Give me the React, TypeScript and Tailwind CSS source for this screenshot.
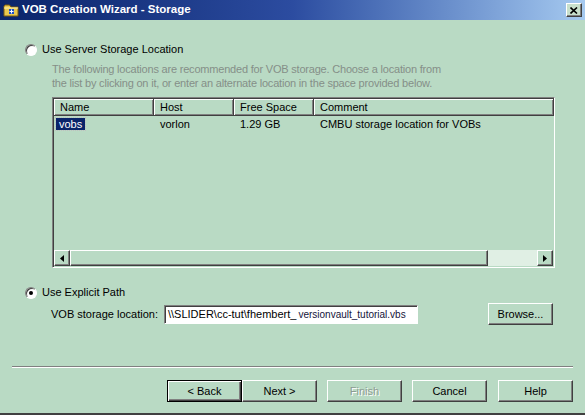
import React from 'react';

// Classic wizard dialog: "VOB Creation Wizard - Storage"

const raised =
    'border border-t-white border-l-white border-r-[#404040] border-b-[#404040] shadow-[inset_-1px_-1px_0_#808080]';

const Radio: React.FC<{ checked?: boolean }> = ({ checked }) => (
    <span className="w-[12px] h-[12px] rounded-full bg-white border border-t-[#808080] border-l-[#808080] border-r-white border-b-white shadow-[inset_1px_1px_0_#404040] flex items-center justify-center shrink-0">
        {checked && <span className="w-[4px] h-[4px] rounded-full bg-black" />}
    </span>
);

const Button: React.FC<{ label: string; w: string; isDefault?: boolean; disabled?: boolean }> = ({ label, w, isDefault, disabled }) => (
    <div
        className={
            `${w} h-[22px] flex items-center justify-center ` +
            (isDefault
                ? 'border border-black shadow-[inset_1px_1px_0_#fff,inset_-1px_-1px_0_#404040,inset_-2px_-2px_0_#808080]'
                : raised) +
            (disabled ? ' text-[#8c9c92] [text-shadow:1px_1px_0_#fff]' : ' text-black')
        }
    >
        {label}
    </div>
);

const FolderIcon = () => (
    <svg width="16" height="16" viewBox="0 0 16 16">
        <path d="M1 4 L1 14 L15 14 L15 5 L8 5 L6.5 3 L2 3 Z" fill="#e8c850" stroke="#7a5a10" strokeWidth="1" />
        <path d="M1 6 L15 6" stroke="#fff3b0" strokeWidth="1" />
        <rect x="6" y="7" width="5" height="5" fill="#2050c8" />
        <path d="M8.5 7.5 L8.5 11.5 M6.5 9.5 L10.5 9.5" stroke="#fff" strokeWidth="1" />
    </svg>
);

const Arrow: React.FC<{ dir: 'left' | 'right' }> = ({ dir }) => (
    <svg width="4" height="7" viewBox="0 0 4 7">
        {dir === 'left' ? <path d="M4 0 L0 3.5 L4 7 Z" fill="#000" /> : <path d="M0 0 L4 3.5 L0 7 Z" fill="#000" />}
    </svg>
);

const COLS = [
    { label: 'Name', w: 'w-[100px]' },
    { label: 'Host', w: 'w-[80px]' },
    { label: 'Free Space', w: 'w-[80px]' },
    { label: 'Comment', w: 'flex-1' },
];

const App: React.FC = () => {
    return (
        <div className="w-[585px] h-[415px] bg-[#b9dac4] flex flex-col font-['Liberation_Sans',Arial,sans-serif] text-[11px] text-black border-b-2 border-[#404040] overflow-hidden">
            {/* Title bar */}
            <div className="h-[20px] shrink-0 flex items-center pl-[3px] pr-[3px] bg-gradient-to-r from-[#0a246a] via-[#2c4ca0] to-[#a6caf0]">
                <FolderIcon />
                <span className="ml-[3px] text-white font-bold text-[11.5px]">VOB Creation Wizard - Storage</span>
                <div className={`ml-auto w-[16px] h-[14px] bg-[#c8e0cc] flex items-center justify-center ${raised}`}>
                    <svg width="8" height="7" viewBox="0 0 8 7">
                        <path d="M0.5 0.5 L7 6.5 M7 0.5 L0.5 6.5" stroke="#000" strokeWidth="1.6" />
                    </svg>
                </div>
            </div>

            {/* Server storage */}
            <div className="mt-[23px] ml-[25px] flex items-center gap-[5px] h-[13px]">
                <Radio />
                <span>Use Server Storage Location</span>
            </div>
            <div className="ml-[52px] mt-[6px] leading-[14px] text-[#858f88] tracking-[-0.2px]">
                <div>The following locations are recommended for VOB storage. Choose a location from</div>
                <div>the list by clicking on it, or enter an alternate location in the space provided below.</div>
            </div>

            {/* List view */}
            <div className="ml-[52px] mt-[7px] w-[503px] h-[171px] flex flex-col border border-t-[#808080] border-l-[#808080] border-r-white border-b-white shadow-[inset_1px_1px_0_#404040] pt-[1px] pl-[1px]">
                <div className="flex h-[17px] shrink-0">
                    {COLS.map(c => (
                        <div
                            key={c.label}
                            className={`${c.w} flex items-center pl-[6px] border-r border-b border-[#404040] shadow-[inset_1px_1px_0_#fff,inset_-1px_-1px_0_#808080]`}
                        >
                            {c.label}
                        </div>
                    ))}
                </div>
                <div className="flex h-[13px] mt-[2px] items-center">
                    <div className="w-[100px] pl-[2px]">
                        <span className="bg-[#0a246a] text-white px-[3px] outline-1 outline-dotted outline-[#c0c0c0]">vobs</span>
                    </div>
                    <div className="w-[80px] pl-[6px]">vorlon</div>
                    <div className="w-[80px] pl-[6px]">1.29 GB</div>
                    <div className="flex-1 pl-[6px]">CMBU storage location for VOBs</div>
                </div>
                <div className="flex-1" />
                {/* Horizontal scrollbar */}
                <div className="h-[16px] flex shrink-0 mr-[1px] mb-[1px]">
                    <div className={`w-[16px] h-[16px] flex items-center justify-center ${raised}`}>
                        <Arrow dir="left" />
                    </div>
                    <div className={`w-[418px] h-[16px] ${raised}`} />
                    <div className="flex-1 bg-[#e0efe4]" />
                    <div className={`w-[16px] h-[16px] flex items-center justify-center ${raised}`}>
                        <Arrow dir="right" />
                    </div>
                </div>
            </div>

            {/* Explicit path */}
            <div className="mt-[18px] ml-[25px] flex items-center gap-[5px] h-[13px]">
                <Radio checked />
                <span>Use Explicit Path</span>
            </div>
            <div className="mt-[4px] ml-[51px] flex items-center h-[22px]">
                <span className="w-[113px]">VOB storage location:</span>
                <div className="w-[254px] h-[19px] bg-white border border-t-[#808080] border-l-[#808080] border-r-white border-b-white shadow-[inset_1px_1px_0_#404040] flex items-center pl-[3px] whitespace-nowrap overflow-hidden">
                    <span>\\SLIDER\cc-tut\fhembert_</span>
                    <span className="ml-[2px] text-[10px] text-[#14143a]">versionvault_tutorial.vbs</span>
                </div>
                <div className="ml-[70px]">
                    <Button label="Browse..." w="w-[65px]" />
                </div>
            </div>

            {/* Separator */}
            <div className="mt-[41px] ml-[12px] w-[561px] border-t border-t-[#808080] border-b border-b-white" />

            {/* Buttons */}
            <div className="mt-[12px] ml-[167px] flex">
                <Button label="< Back" w="w-[75px]" isDefault />
                <Button label="Next >" w="w-[75px]" />
                <div className="ml-[10px]">
                    <Button label="Finish" w="w-[75px]" disabled />
                </div>
                <div className="ml-[10px]">
                    <Button label="Cancel" w="w-[75px]" />
                </div>
                <div className="ml-[11px]">
                    <Button label="Help" w="w-[75px]" />
                </div>
            </div>
        </div>
    );
};

export default App;
